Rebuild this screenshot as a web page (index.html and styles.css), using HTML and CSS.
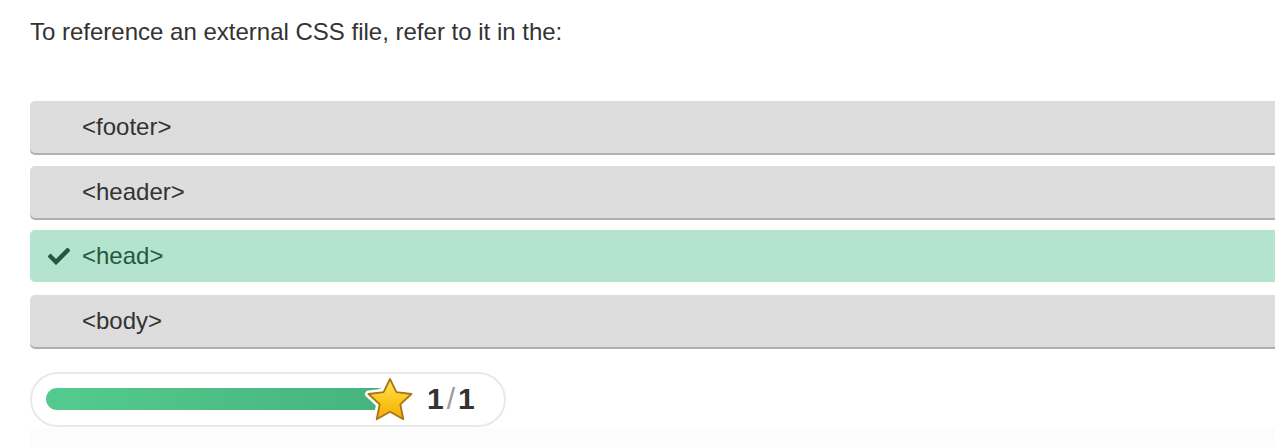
FILE: index.html
```html
<!DOCTYPE html>
<html>
<head>
<meta charset="utf-8">
<link rel="stylesheet" href="styles.css">
</head>
<body>
<div class="quiz">
  <p class="question">To reference an external CSS file, refer to it in the:</p>
  <div class="options">
    <div class="option">&lt;footer&gt;</div>
    <div class="option">&lt;header&gt;</div>
    <div class="option correct">
      <svg class="check" width="22" height="17" viewBox="0 0 22 17"><path d="M2.5 8.5 L8 14 L19.5 2.5" fill="none" stroke="#25593f" stroke-width="4.4" stroke-linecap="square"/></svg>
      <span>&lt;head&gt;</span>
    </div>
    <div class="option">&lt;body&gt;</div>
  </div>
  <div class="score">
    <div class="track"><div class="fill"></div></div>
    <svg class="star" width="52" height="50" viewBox="0 0 52 50">
      <defs>
        <linearGradient id="g" x1="0" y1="0" x2="0" y2="1">
          <stop offset="0" stop-color="#ffe36a"/>
          <stop offset="0.55" stop-color="#fcc51a"/>
          <stop offset="1" stop-color="#f4a90f"/>
        </linearGradient>
      </defs>
      <path d="M26 3 L32.4 16.2 L47.5 18 L36.3 28.3 L39.3 43.3 L26 35.8 L12.7 43.3 L15.7 28.3 L4.5 18 L19.6 16.2 Z" fill="#fff" stroke="#fff" stroke-width="7" stroke-linejoin="round"/>
      <path d="M26 3 L32.4 16.2 L47.5 18 L36.3 28.3 L39.3 43.3 L26 35.8 L12.7 43.3 L15.7 28.3 L4.5 18 L19.6 16.2 Z" fill="url(#g)" stroke="#a9750f" stroke-width="1.8" stroke-linejoin="round"/>
    </svg>
    <div class="count"><b>1</b><span class="slash">/</span><b>1</b></div>
  </div>
  <div class="footer-band"></div>
</div>
</body>
</html>
```

FILE: styles.css
```css
html, body {
  margin: 0;
  padding: 0;
  background: #fff;
  overflow: hidden;
}
body {
  font-family: "Liberation Sans", Arial, sans-serif;
  color: #333;
}
.quiz {
  padding: 14px 0 0 30px;
  width: 1300px;
}
.question {
  margin: 0;
  font-size: 24px;
  line-height: 36px;
  color: #333;
}
.options {
  margin-top: 51px;
  display: flex;
  flex-direction: column;
  gap: 12.5px;
}
.option {
  height: 52px;
  background: #dddddd;
  border-radius: 5px;
  box-shadow: 0 2px 0 #b0b0b0;
  display: flex;
  align-items: center;
  padding-left: 52px;
  font-size: 24px;
  color: #333;
  position: relative;
}
.option.correct {
  background: #b4e3cf;
  color: #25593f;
  box-shadow: none;
}
.check {
  position: absolute;
  left: 18px;
  top: 18px;
}
.score {
  margin-top: 25px;
  width: 458px;
  height: 51px;
  border: 2px solid #e9e9e9;
  border-radius: 28px;
  display: flex;
  align-items: center;
  padding-left: 14px;
  box-sizing: content-box;
}
.track {
  width: 342px;
  height: 22px;
}
.fill {
  width: 100%;
  height: 100%;
  border-radius: 11px;
  background: linear-gradient(to right, #54cb8e, #46b37d);
}
.star {
  margin-left: -24px;
  margin-top: 4px;
  position: relative;
}
.count {
  margin-left: 11px;
  font-size: 30px;
  color: #333;
}
.count b {
  font-weight: bold;
}
.slash {
  color: #9a9a9a;
  margin: 0 3px;
}
.footer-band {
  height: 22px;
  background: #fcfcfc;
  margin-top: 1px;
}
```
